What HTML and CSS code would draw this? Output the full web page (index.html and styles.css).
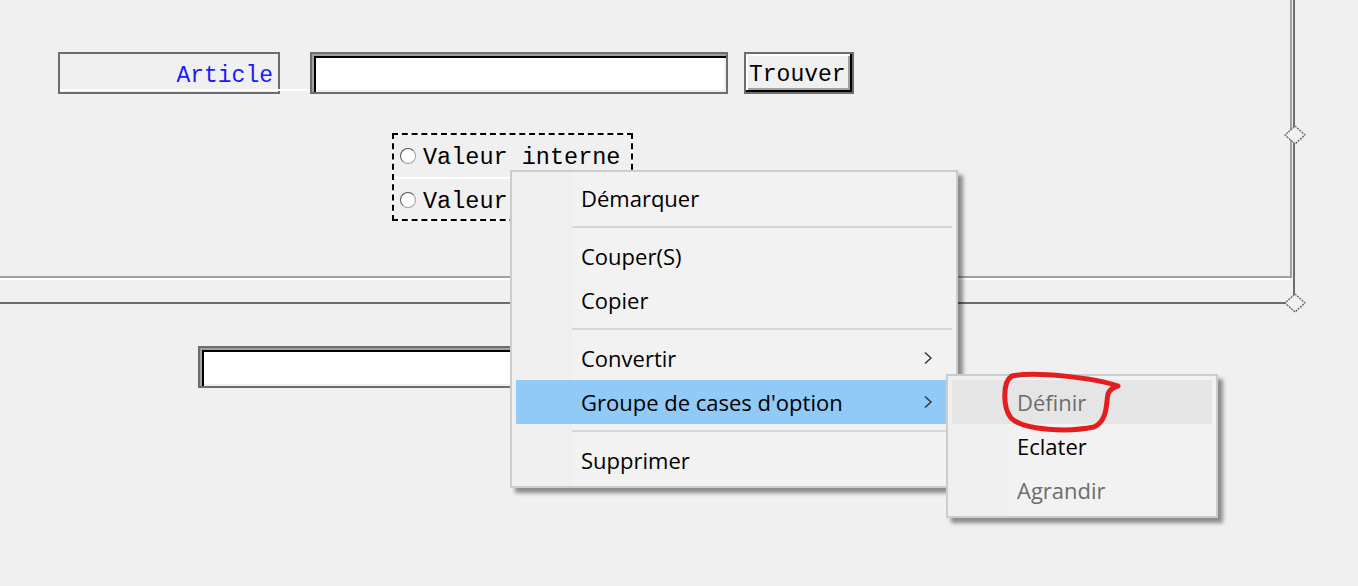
FILE: index.html
```html
<!DOCTYPE html>
<html lang="fr">
<head>
<meta charset="utf-8">
<title>Formulaire</title>
<link rel="stylesheet" href="styles.css">
</head>
<body>
<div class="canvas">
  <div class="frame-dark"></div>
  <div class="frame-light"></div>
  <svg class="handle handle-mid" width="22" height="20" viewBox="0 0 22 20"><polygon points="11,1 21,10 11,19 1,10" /></svg>
  <svg class="handle handle-corner" width="22" height="20" viewBox="0 0 22 20"><polygon points="11,1 21,10 11,19 1,10" /></svg>

  <div class="label-article">Article</div>
  <div class="label-line"></div>
  <div class="field field-article"></div>
  <div class="btn-find">Trouver</div>

  <div class="radio-group">
    <div class="radio-row"><span class="radio"></span><span>Valeur interne</span></div>
    <div class="radio-row"><span class="radio"></span><span class="clip">Valeur</span></div>
  </div>

  <div class="field field-second"></div>
</div>

<div class="menu context">
  <div class="item">Démarquer</div>
  <div class="sep"></div>
  <div class="item">Couper(S)</div>
  <div class="item">Copier</div>
  <div class="sep"></div>
  <div class="item">Convertir<svg class="chev" width="10" height="14" viewBox="0 0 10 14"><polyline points="2,1.5 8,7 2,12.5" /></svg></div>
  <div class="item active">Groupe de cases d'option<svg class="chev" width="10" height="14" viewBox="0 0 10 14"><polyline points="2,1.5 8,7 2,12.5" /></svg></div>
  <div class="sep"></div>
  <div class="item">Supprimer</div>
</div>

<div class="menu submenu">
  <div class="item disabled hover">Définir</div>
  <div class="item">Eclater</div>
  <div class="item disabled">Agrandir</div>
</div>

<svg class="annotation" width="1358" height="586" viewBox="0 0 1358 586">
  <path d="M1118,386 C1095,378 1035,371 1012,376 C1002,382 1003,408 1011,418 C1024,431 1070,432 1094,427 C1108,421 1106,402 1108,394 C1110,389 1114,387 1118,386" />
</svg>
</body>
</html>
```

FILE: styles.css
```css
html, body {
  margin: 0;
  padding: 0;
}

body {
  width: 1358px;
  height: 586px;
  overflow: hidden;
  background: #f0f0f0;
  position: relative;
  font-family: "Liberation Mono", "Courier New", monospace;
}

.canvas {
  position: relative;
  width: 1358px;
  height: 586px;
}

/* designer frame lines */
.frame-light {
  position: absolute;
  left: -2px;
  top: -2px;
  width: 1292px;
  height: 278px;
  border-right: 2px solid #a0a0a0;
  border-bottom: 2px solid #a0a0a0;
}

.frame-light::after {
  content: "";
  position: absolute;
  left: 0;
  right: 0;
  bottom: -4px;
  height: 2px;
  background: #ffffff;
}

.frame-dark {
  position: absolute;
  left: -2px;
  top: -2px;
  width: 1295px;
  height: 304px;
  border-right: 2px solid #6d6d6d;
  border-bottom: 2px solid #6d6d6d;
}

.handle {
  position: absolute;
}

.handle polygon {
  fill: #f0f0f0;
  stroke: #6d6d6d;
  stroke-width: 1.4;
  stroke-dasharray: 2 1;
}

.handle-mid {
  left: 1284px;
  top: 125px;
}

.handle-corner {
  left: 1284px;
  top: 293px;
}

/* form controls */
.label-article {
  position: absolute;
  left: 58px;
  top: 52px;
  width: 222px;
  height: 42px;
  box-sizing: border-box;
  border: 2px solid #6d6d6d;
  padding-right: 5px;
  text-align: right;
  color: #1a1aff;
  font-size: 23px;
  line-height: 44px;
}

.label-line {
  position: absolute;
  left: 60px;
  top: 89px;
  width: 252px;
  height: 2px;
  background: #ffffff;
}

.field {
  position: absolute;
  box-sizing: border-box;
  height: 42px;
  border: 2px solid #6d6d6d;
  background: #ffffff;
  box-shadow: inset 2px 2px 0 #a0a0a0, inset 4px 4px 0 #000000, inset -2px -2px 0 #f0f0f0;
}

.field-article {
  left: 310px;
  top: 52px;
  width: 418px;
}

.field-second {
  left: 198px;
  top: 346px;
  width: 420px;
}

.btn-find {
  position: absolute;
  left: 744px;
  top: 52px;
  width: 110px;
  height: 42px;
  box-sizing: border-box;
  border: 2px solid #6d6d6d;
  background: #f0f0f0;
  box-shadow: inset -2px -2px 0 #000000, inset 2px 2px 0 #ffffff, inset -4px -4px 0 #a0a0a0;
  padding-left: 3px;
  font-size: 23px;
  line-height: 43px;
  color: #000;
  overflow: hidden;
}

.radio-group {
  position: absolute;
  left: 392px;
  top: 133px;
  width: 241px;
  height: 88px;
  box-sizing: border-box;
  border: 2px dashed #000000;
  background: linear-gradient(#f0f0f0, #f0f0f0) padding-box, #ffffff;
  display: flex;
  flex-direction: column;
  font-size: 23.5px;
  color: #000;
}

.radio-row {
  display: flex;
  align-items: center;
  gap: 7px;
  padding-left: 6px;
  padding-top: 3px;
  height: 40px;
  white-space: nowrap;
  overflow: hidden;
}

.radio-row + .radio-row {
  border-top: 2px solid #ffffff;
  height: 36px;
  padding-top: 4px;
}

.radio {
  width: 14px;
  height: 14px;
  border-radius: 50%;
  background: #ffffff;
  border: 1.5px solid;
  border-color: #555 #a0a0a0 #a0a0a0 #555;
  flex: none;
  margin-top: -3px;
}

/* context menus */
.menu {
  position: absolute;
  box-sizing: border-box;
  border: 2px solid #cccccc;
  padding: 4px;
  background: linear-gradient(to right, #efefef 60px, #f2f2f2 60px);
  box-shadow: 5px 5px 4px rgba(0, 0, 0, 0.42);
  font-family: "Open Sans", "Noto Sans", sans-serif;
  font-size: 22px;
  color: #000;
  display: flex;
  flex-direction: column;
}

.context {
  left: 510px;
  top: 170px;
  width: 448px;
}

.submenu {
  left: 946px;
  top: 374px;
  width: 272px;
}

.item {
  height: 44px;
  display: flex;
  align-items: center;
  padding-left: 65px;
  padding-right: 19px;
  white-space: nowrap;
}

.item.active {
  background: #91c9f7;
}

.item.hover {
  background: #e5e5e5;
}

.item.disabled {
  color: #6d6d6d;
}

.chev {
  margin-left: auto;
}

.chev polyline {
  fill: none;
  stroke: #333;
  stroke-width: 1.4;
}

.sep {
  height: 14px;
  display: flex;
  align-items: center;
  margin-left: 56px;
}

.sep::before {
  content: "";
  flex: 1;
  height: 2px;
  background: #d7d7d7;
}

.annotation {
  position: absolute;
  left: 0;
  top: 0;
  pointer-events: none;
}

.annotation path {
  fill: none;
  stroke: #e41e1e;
  stroke-width: 5;
  stroke-linecap: round;
  stroke-linejoin: round;
}
```
